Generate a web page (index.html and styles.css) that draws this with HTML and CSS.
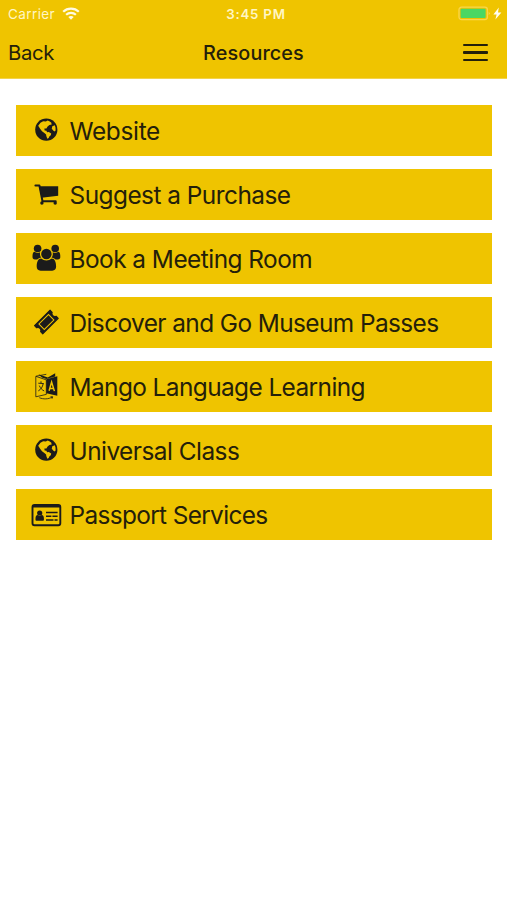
FILE: index.html
```html
<!DOCTYPE html>
<html lang="en">
<head>
<meta charset="utf-8">
<title>Resources</title>
<link rel="stylesheet" href="styles.css">
</head>
<body>
<svg width="0" height="0" class="defs">
  <symbol id="globe" viewBox="0 0 40 52">
    <circle cx="20.3" cy="25.7" r="11.1" fill="#1b1b1b"/>
    <path fill="#efc400" d="M12.2 21.7l2.3-3 2.7-1.5 2.6.3 1.9-1 1.6.7 1.9 1.4.5 1.9-2.3.5-1.8 1.4-1.2 2-2 .2.2 1.8 1.9.3.5 1.6 1.8-.2 2.4 1.4-.4 1.7-1.5 1.2-.6 1.7-1.4.6-1-2.6-.2-1.7-1.7-1.5-2.4-1.6-1.7-2.2z"/>
    <path fill="#efc400" d="M26.3 22.3l2.5-1.1.7 2.2.1 3-1.1 1-1.3-.8-1.4-1.9z"/>
  </symbol>
  <symbol id="cart" viewBox="0 0 40 52">
    <path d="M9.4 17.5h4l3.1 15.7h13.2" fill="none" stroke="#1b1b1b" stroke-width="2" stroke-linejoin="round" stroke-linecap="round"/>
    <path d="M13 18.3h19.2v9.4l-16.6 2z" fill="#1b1b1b"/>
    <circle cx="15.9" cy="35" r="1.7" fill="#1b1b1b"/><circle cx="29.2" cy="35" r="1.7" fill="#1b1b1b"/>
  </symbol>
  <symbol id="users" viewBox="0 0 40 52">
    <g fill="#1b1b1b">
      <circle cx="11.6" cy="16.5" r="3.8"/><circle cx="29.2" cy="16.5" r="3.8"/>
      <path d="M8.3 19.8c2 1.4 4 1.4 5.8.5-.4 2.4.1 3.9 1.2 5.5-1.6 0-2.9.6-4.1 1.6H9c-1.7 0-2.5-.9-2.5-2.5 0-2.6.3-4.8 1.8-5.1zM32.5 19.8c-2 1.4-4 1.4-5.8.5.4 2.4-.1 3.9-1.2 5.5 1.6 0 2.9.6 4.1 1.6h2.2c1.7 0 2.5-.9 2.5-2.5 0-2.6-.3-4.8-1.8-5.1z"/>
      <circle cx="20.4" cy="22" r="5.2"/>
      <path d="M15.2 26.6c3 2.5 7.4 2.5 10.4 0 3 .1 4.5 3.2 4.5 8 0 2.7-1.3 4.1-3.9 4.1H14.6c-2.6 0-3.9-1.4-3.9-4.1 0-4.8 1.5-7.9 4.5-8z"/>
    </g>
  </symbol>
  <symbol id="ticket" viewBox="0 0 40 52">
    <g transform="translate(20.4 26) rotate(-45)">
      <path fill="#1b1b1b" stroke="#1b1b1b" stroke-width="1" stroke-linejoin="round" d="M-11-5.8h22v3a3 3 0 0 0 0 5.6v3h-22v-3a3 3 0 0 0 0-5.6z"/>
      <path fill="none" stroke="#efc400" stroke-width="1" d="M-6.8-3.8H6.8v7.6H-6.8z"/>
    </g>
  </symbol>
  <symbol id="language" viewBox="0 0 40 52">
    <path d="M9.8 16.3l10.5 3.6v14.5L9.8 36.8zM10 16.2l10.3-1.9" fill="none" stroke="#1b1b1b" stroke-width=".8"/>
    <path d="M20.3 19.2l11 -3v19.5l-11-2.5zM12.4 14.2l9.4 3.3 7.4-4.3v3.2l-8.9 2.7-4.4-1.5z" fill="#1b1b1b"/>
    <path d="M12.3 23.2l5.5.4M15 21.3v2M17.2 23.7c-.7 3.2-2.2 5.7-4.9 7.2M13.3 25.6c1.2 2.7 2.6 4.2 4.9 5.4" fill="none" stroke="#1b1b1b" stroke-width=".9"/>
    <path d="M23.1 30.8l2.5-8.7 2.8 9M24 28.3l3.5.3" fill="none" stroke="#efc400" stroke-width="1.5"/>
    <path d="M13.3 37.7c4.1 1.7 8.9 1.6 13.2-.7m-2-.3l2.2.1-.8 2" fill="none" stroke="#1b1b1b" stroke-width=".8"/>
  </symbol>
  <symbol id="card" viewBox="0 0 40 52">
    <rect x="6.5" y="16" width="27.8" height="20.2" rx="2" fill="none" stroke="#1b1b1b" stroke-width="1.9"/>
    <path d="M6.5 16h27.8v2.4H6.5zM9.5 31v-1.5c0-2.2.7-3.3 2.2-3.5 1.2 1 2.8 1 4 0 1.5.2 2.2 1.3 2.2 3.5V31q0 .8-.9.8h-6.6q-.9 0-.9-.8z" fill="#1b1b1b"/>
    <circle cx="13.7" cy="24" r="2.6" fill="#1b1b1b"/>
    <path d="M20 23.5h11.6M20 27.3h5.4m1 0h5.2M20 31h7.5m1 0h3.1" stroke="#1b1b1b" stroke-width="1.5"/>
  </symbol>
</svg>
<header class="top">
  <div class="status">
    <div class="carrier"><span>Carrier</span>
      <svg width="18" height="13" viewBox="0 0 18 13"><g fill="none" stroke="#fffbe2" stroke-width="2.2"><path d="M1.2 4.8C5.5.6 12.5.6 16.8 4.8"/><path d="M4.1 7.8c2.8-2.6 7-2.6 9.8 0"/></g><path d="M6.3 10c1.5-1.3 3.9-1.3 5.4 0L9 12.7z" fill="#fffbe2"/></svg>
    </div>
    <div class="time">3:45 PM</div>
    <svg class="power" width="46" height="16" viewBox="0 0 46 16"><rect x="1" y="1.2" width="28.4" height="12.4" rx="2.5" fill="none" stroke="#f9d64c" stroke-width="1.3"/><rect x="2.6" y="2.8" width="25" height="9.2" rx="1" fill="#4bd763"/><path d="M30.8 5.5q1.6 1.9 0 3.8z" fill="#fbe58a"/><path d="M40.8 1.6L35.4 8.4h3.2l-1.2 5 6-7h-3.4z" fill="#fffdf0"/></svg>
  </div>
  <nav class="nav">
    <span class="back">Back</span>
    <h1 class="title">Resources</h1>
    <div class="menu"><i></i><i></i><i></i></div>
  </nav>
</header>
<main class="list">
  <a class="item wide"><svg class="icon"><use href="#globe"/></svg><span>Website</span></a>
  <a class="item"><svg class="icon"><use href="#cart"/></svg><span>Suggest a Purchase</span></a>
  <a class="item"><svg class="icon"><use href="#users"/></svg><span>Book a Meeting Room</span></a>
  <a class="item snug"><svg class="icon"><use href="#ticket"/></svg><span>Discover and Go Museum Passes</span></a>
  <a class="item snug"><svg class="icon"><use href="#language"/></svg><span>Mango Language Learning</span></a>
  <a class="item"><svg class="icon"><use href="#globe"/></svg><span>Universal Class</span></a>
  <a class="item tight"><svg class="icon"><use href="#card"/></svg><span>Passport Services</span></a>
</main>
</body>
</html>
```
FILE: styles.css
```css
* { box-sizing: border-box; }
body { margin: 0; background: #fff; color: #24200a; font-family: Inter, sans-serif; }
.defs { position: absolute; }
.top { height: 79px; background: #efc400; border-bottom: 1px solid #f3d34a; }
.status { height: 27px; display: grid; grid-template-columns: 1fr auto 1fr; align-items: center; padding: 0 3px 0 8px; color: #fff6c4; font-size: 13.5px; }
.carrier { display: flex; align-items: center; gap: 7px; letter-spacing: .4px; }
.time { font-weight: 600; letter-spacing: .75px; font-size: 13.3px; }
.power { justify-self: end; }
.nav { height: 51px; display: grid; grid-template-columns: 1fr auto 1fr; align-items: center; padding: 0 19px 0 19px; }
.back { font-size: 20.3px; letter-spacing: -.3px; margin-left: -11px; }
.title { margin: 0; font-size: 19.8px; font-weight: 500; letter-spacing: .13px; }
.menu { justify-self: end; width: 25px; display: grid; gap: 5px; }
.menu i { height: 2.5px; background: #24200a; border-radius: 1px; }
.list { padding: 25.5px 15px 0 15.5px; display: grid; gap: 13.1px; }
.item { height: 51px; background: #efc400; display: flex; align-items: center; padding-left: 10.5px; font-size: 24.4px; letter-spacing: -.52px; white-space: nowrap; }
.item span { padding-top: 1px; }
.wide { letter-spacing: -.32px; }
.snug { letter-spacing: -.58px; }
.tight { letter-spacing: -.65px; }
.icon { width: 40px; height: 52px; margin-right: 3.5px; flex: none; }
```
